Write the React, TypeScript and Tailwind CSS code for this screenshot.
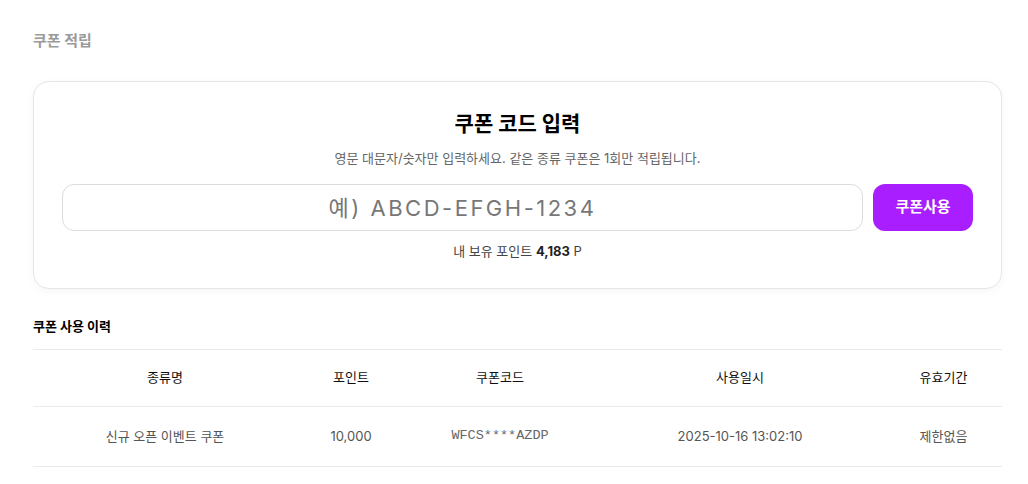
import { useState } from "react";

const rows = [
  { name: "신규 오픈 이벤트 쿠폰", point: "10,000", code: "WFCS****AZDP", date: "2025-10-16 13:02:10", period: "제한없음" },
];

export default function App() {
  const [code, setCode] = useState("");

  return (
    <div className="min-h-screen bg-white pl-[33px] pr-[26px] pt-[30px] pb-6 font-['Inter','Noto_Sans_CJK_KR',sans-serif] text-[#111]">
      <h1 className="text-[15px] font-bold text-[#9a9a9a] leading-[22px]">쿠폰 적립</h1>

      <section className="mt-[29px] rounded-2xl border border-[#e6e6e6] bg-white px-[28px] pt-[26px] pb-[27px] shadow-[0_2px_10px_rgba(0,0,0,0.04)]">
        <h2 className="text-center text-[21px] font-bold leading-[32px] text-black">쿠폰 코드 입력</h2>
        <p className="mt-[8px] text-center text-[13px] leading-[20px] text-[#666]">
          영문 대문자/숫자만 입력하세요. 같은 종류 쿠폰은 1회만 적립됩니다.
        </p>
        <div className="mt-[16px] flex gap-[10px]">
          <input
            value={code}
            onChange={(e) => setCode(e.target.value.toUpperCase())}
            placeholder="예) ABCD-EFGH-1234"
            className="h-[47px] flex-1 rounded-xl border border-[#dcdcdc] bg-white px-4 text-center text-[22px] tracking-[2.5px] text-[#333] placeholder:text-[#777] focus:outline-none"
          />
          <button className="h-[47px] w-[100px] rounded-xl bg-[#a91eff] text-[15px] font-bold text-white">
            쿠폰사용
          </button>
        </div>
        <p className="mt-[10px] text-center text-[13px] leading-[20px] text-[#444]">
          내 보유 포인트 <span className="font-bold text-[#222]">4,183</span> P
        </p>
      </section>

      <h3 className="mt-[27px] text-[13px] font-bold leading-[20px] text-black">쿠폰 사용 이력</h3>

      <table className="mt-[13px] w-full table-fixed border-collapse text-[13px]">
        <colgroup>
          <col className="w-[264px]" />
          <col className="w-[108px]" />
          <col className="w-[190px]" />
          <col className="w-[290px]" />
          <col />
        </colgroup>
        <thead>
          <tr className="h-[57px] border-y border-[#ebebeb]">
            <th className="font-normal text-[#111]">종류명</th>
            <th className="font-normal text-[#111]">포인트</th>
            <th className="font-normal text-[#111]">쿠폰코드</th>
            <th className="font-normal text-[#111]">사용일시</th>
            <th className="font-normal text-[#111]">유효기간</th>
          </tr>
        </thead>
        <tbody>
          {rows.map((r) => (
            <tr key={r.code} className="h-[60px] border-b border-[#ebebeb] text-center text-[#555]">
              <td>{r.name}</td>
              <td>{r.point}</td>
              <td className="font-['Liberation_Mono',monospace] text-[13.5px] text-[#666]">{r.code}</td>
              <td>{r.date}</td>
              <td>{r.period}</td>
            </tr>
          ))}
        </tbody>
      </table>
    </div>
  );
}
